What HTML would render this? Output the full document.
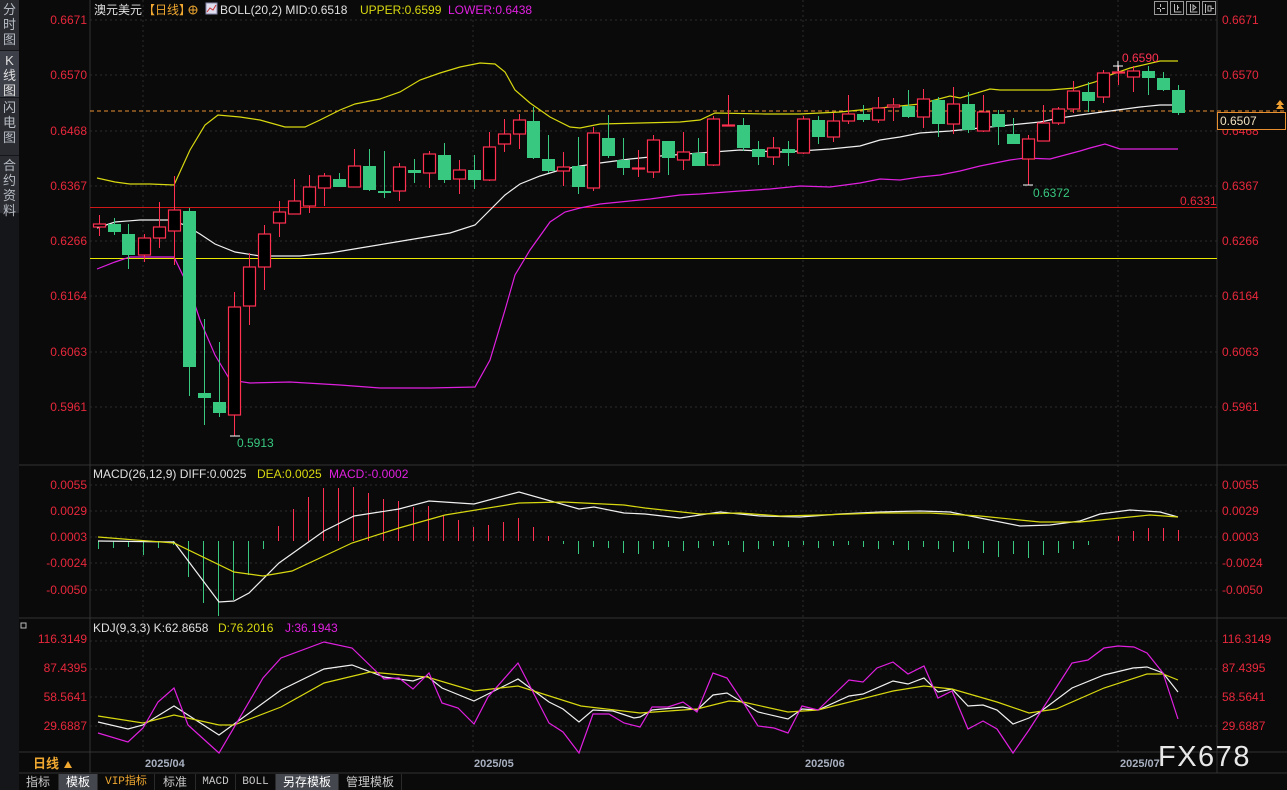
<!DOCTYPE html>
<html><head><meta charset="utf-8">
<style>
html,body{margin:0;background:#0a0a0a;width:1287px;height:790px;overflow:hidden;font-family:"Liberation Sans","Noto Sans CJK SC",sans-serif}
#side{position:absolute;left:0;top:0;width:19px;height:790px;background:#15161a}
.sb{position:absolute;left:0;width:19px;background:#2a2c31;color:#b8bcc4;font-size:13px;line-height:15px;text-align:center;padding-top:2px;box-sizing:border-box}
svg{position:absolute;left:0;top:0}
#tabs{position:absolute;left:18px;top:774px;height:16px;display:flex;font-size:12px;line-height:16px;color:#c8c8c8;white-space:nowrap;overflow:hidden}
#tabs div{padding:0 6px;border-right:1px solid #2a2a2a;white-space:nowrap;text-align:center}
</style></head><body>
<div id="side">
<div class="sb" style="top:0;height:50px">分<br>时<br>图</div>
<div class="sb" style="top:51px;height:46px;background:#3c3f47;color:#e0e0e0">K<br>线<br>图</div>
<div class="sb" style="top:98px;height:57px">闪<br>电<br>图</div>
<div class="sb" style="top:156px;height:57px">合<br>约<br>资<br>料</div>
</div>
<svg id="s" width="1287" height="790" xmlns="http://www.w3.org/2000/svg"></svg>
<div id="tabs">
<div style="width:28px">指标</div><div style="background:#45474f;color:#fff;width:26px">模板</div><div style="color:#f0a830;width:44px;font-family:'Liberation Mono','Noto Sans CJK SC',monospace;font-size:11px">VIP指标</div><div style="width:28px">标准</div><div style="width:27px;font-family:'Liberation Mono',monospace;font-size:11px">MACD</div><div style="width:27px;font-family:'Liberation Mono',monospace;font-size:11px">BOLL</div><div style="background:#45474f;color:#fff;width:50px">另存模板</div><div style="width:50px">管理模板</div>
</div>
<script>
var o='';
function L(x1,y1,x2,y2,c,w,d){o+='<line x1="'+x1+'" y1="'+y1+'" x2="'+x2+'" y2="'+y2+'" stroke="'+c+'" stroke-width="'+(w||1)+'"'+(d?' stroke-dasharray="'+d+'"':'')+'/>';}
function P(pts,c){o+='<polyline fill="none" stroke="'+c+'" stroke-width="1.2" points="'+pts+'"/>';}
function T(x,y,t,c,s,a,extra){o+='<text x="'+x+'" y="'+y+'" fill="'+c+'" font-size="'+(s||12)+'"'+(a?' text-anchor="'+a+'"':'')+(extra||'')+'>'+t+'</text>';}
L(90,0,90,773,'#333');L(1217,0,1217,773,'#333');
L(19,465,1287,465,'#333');L(19,618,1287,618,'#333');L(19,752,1287,752,'#333');L(19,773,1287,773,'#333');
[20,75,131,186,241,296,352,407].forEach(function(y){L(90,y,1217,y,'#2c2c2c',1,'2,3');});
[485,511,537,563,590,641,669,697,726].forEach(function(y){L(90,y,1217,y,'#2c2c2c',1,'2,3');});
[143,473,803,1118].forEach(function(x){L(x,0,x,752,'#2c2c2c',1,'2,3');});
var pl=[['0.6671',20],['0.6570',75],['0.6468',131],['0.6367',186],['0.6266',241],['0.6164',296],['0.6063',352],['0.5961',407]];
pl.forEach(function(p){T(87,p[1]+4,p[0],'#e8283c',12,'end');T(1222,p[1]+4,p[0],'#e8283c',12);});
[['0.0055',485],['0.0029',511],['0.0003',537],['-0.0024',563],['-0.0050',590]].forEach(function(p){T(87,p[1]+4,p[0],'#e8283c',12,'end');T(1222,p[1]+4,p[0],'#e8283c',12);});
[['116.3149',639],['87.4395',668],['58.5641',697],['29.6887',726]].forEach(function(p){T(87,p[1]+4,p[0],'#e8283c',12,'end');T(1222,p[1]+4,p[0],'#e8283c',12);});
L(90,207.5,1217,207.5,'#d01818');L(90,258.5,1217,258.5,'#e8e800');
L(90,111,1287,111,'#e89030',1,'4,3');
P('97,178 115,182 130,184 150,184 174,185 190,150 205,125 218,115 240,117 260,120 285,127 305,127 320,120 340,110 355,104 380,99 400,92 420,80 440,73 460,67 480,63 495,64 505,72 515,90 530,103 550,117 570,127 580,128 600,124 640,123 680,122 700,120 715,113 765,114 800,114 840,112 860,110 890,107 920,104 950,96 960,98 990,89 1000,90 1050,90 1075,88 1095,82 1110,75 1130,68 1160,61 1178,61','#d8d810');
P('97,228 115,222 140,220 170,220 185,225 200,234 215,244 235,252 260,256 300,256 330,253 360,248 390,243 420,238 450,233 475,225 490,210 505,195 520,184 540,176 560,170 580,166 600,163 630,159 660,156 700,153 740,150 780,152 800,151 830,149 860,146 880,140 900,137 920,133 950,131 980,128 1000,126 1020,124 1040,122 1060,118 1080,115 1110,111 1140,107 1160,105 1178,105','#f0f0f0');
P('97,269 115,262 130,257 174,257 190,290 200,320 215,355 230,380 250,383 290,382 340,385 380,388 430,388 475,387 490,360 505,310 515,275 530,250 550,222 565,212 580,208 600,204 650,199 680,195 700,194 740,191 770,189 800,186 830,187 860,183 880,179 900,180 920,177 940,175 960,171 980,166 1000,162 1010,160 1025,158 1050,159 1080,151 1090,148 1105,144 1120,149 1150,149 1178,149','#e020e0');
var C=[[98.7,224,227,215,236,'r'],[113.7,224,232,218,235,'g'],[128.3,234,255,224,269,'g'],[143.7,238,255,234,262,'r'],[158.7,227,238,202,248,'r'],[173.7,210,231,176,265,'r'],[188.7,211,367,208,396,'g'],[203.7,393,398,319,425,'g'],[218.7,402,413,342,417,'g'],[233.7,307,415,292,436,'r'],[248.7,267,306,253,325,'r'],[263.7,234,267,225,290,'r'],[278.7,212,223,201,237,'r'],[293.7,201,214,179,206,'r'],[308.7,187,206,175,213,'r'],[323.7,176,188,173,206,'r'],[338.7,179,187,173,184,'g'],[353.7,166,187,149,187,'r'],[368.7,166,190,149,191,'g'],[383.7,191,193,151,198,'g'],[398.7,167,191,163,201,'r'],[413.7,170,173,159,183,'g'],[428.7,154,173,151,188,'r'],[443.7,155,180,143,183,'g'],[458.7,170,179,160,194,'r'],[473.7,170,180,155,189,'g'],[488.7,147,180,132,181,'r'],[503.7,134,144,119,152,'r'],[518.5,120,134,114,149,'r'],[533.3,121,158,107,159,'g'],[548,159,171,135,173,'g'],[563,167,171,152,186,'r'],[578,166,187,137,194,'g'],[593.3,133,188,127,191,'r'],[608.3,138,156,115,158,'g'],[623,160,168,138,175,'g'],[638.3,168,169,150,177,'r'],[653.3,140,172,135,178,'r'],[668.3,141,158,141,175,'g'],[683.3,152,160,132,170,'r'],[698.3,153,166,138,166,'g'],[713.3,119,165,116,166,'r'],[728.3,125,126,95,126,'r'],[743,125,148,118,151,'g'],[758,149,157,141,165,'g'],[773,148,157,137,165,'r'],[788,149,153,141,166,'g'],[803.3,119,153,116,154,'r'],[818.3,120,137,116,144,'g'],[833.3,121,137,113,142,'r'],[848,114,121,95,124,'r'],[863,114,120,105,122,'g'],[878,108,120,97,123,'r'],[893,105,107,98,121,'r'],[908,106,117,90,118,'g'],[923,99,117,89,128,'r'],[938,100,124,97,137,'g'],[953,104,124,87,134,'r'],[968,104,130,92,133,'g'],[983,112,131,95,132,'r'],[998,114,127,110,145,'g'],[1013.3,134,144,118,144,'g'],[1028.3,139,159,135,185,'r'],[1043.3,123,141,105,141,'r'],[1058.3,109,123,107,125,'r'],[1073.3,91,109,81,113,'r'],[1088.3,92,101,82,112,'g'],[1103.3,73,97,70,103,'r'],[1118.3,72,73,66,85,'r'],[1133.3,71,77,66,92,'r'],[1148.3,71,78,66,95,'g'],[1163.3,78,90,72,91,'g'],[1178.3,90,113,85,115,'g']];
C.forEach(function(c){var x=Math.round(c[0])+0.5,col=c[5]=='r'?'#ff3050':'#38c880';
L(x,c[3],x,c[4],col);var t=Math.min(c[1],c[2]),b=Math.max(c[1],c[2]);if(b-t<1)b=t+1;
if(c[5]=='r')o+='<rect x="'+(x-6)+'" y="'+t+'" width="12" height="'+(b-t)+'" fill="#000" stroke="'+col+'" stroke-width="1.2"/>';
else o+='<rect x="'+(x-6.5)+'" y="'+t+'" width="13" height="'+(b-t)+'" fill="'+col+'"/>';});
L(230,436,240,436,'#fff');L(1113,66,1123,66,'#fff');L(1118,61,1118,71,'#fff');L(1023,185,1033,185,'#fff');
T(237,447,'0.5913','#38c880',12);T(1122,62,'0.6590','#ff3050',12);T(1033,197,'0.6372','#38c880',12);T(1180,205,'0.6331','#e8283c',12);
o+='<rect x="1217.5" y="112.5" width="68" height="17" fill="#0a0a0a" stroke="#e89030"/>';T(1220,125,'0.6507','#f0e0c0',12);
o+='<path d="M1276,105 L1280,100 L1284,105 Z M1276,109 L1280,104 L1284,109 Z" fill="#f0a030"/>';
[1154,1170,1186,1202].forEach(function(x,i){o+='<rect x="'+(x+0.5)+'" y="1.5" width="13" height="13" fill="none" stroke="#999"/>';});
o+='<path d="M1160.5,4v3M1160.5,9v3M1157,8.5h3M1162,8.5h3" stroke="#bbb"/><path d="M1174.5,4v8h7M1177.5,5v5M1179,7l-1.5,1.5" stroke="#bbb" fill="none"/><path d="M1190.5,4v8h7M1193,5v5l3,-2.5z" stroke="#bbb" fill="none"/><path d="M1205.5,4v9M1208,6h3v5h-3z M1211,8.5h3" stroke="#bbb" fill="none"/>';
T(94,14,'澳元美元','#e0e0e0',12);T(143,14,'【日线】','#f0a830',12);
o+='<circle cx="193" cy="10" r="4" fill="none" stroke="#f0a830"/><path d="M189,10h8M193,6v8" stroke="#f0a830"/>';
o+='<rect x="206" y="3" width="11" height="11" fill="#dde" stroke="#88a"/><path d="M207,12l3,-4l3,2l3,-5" stroke="#c33" fill="none"/>';
T(220,14,'BOLL(20,2) MID:0.6518','#e0e0e0',12);T(360,14,'UPPER:0.6599','#d8d810',12);T(448,14,'LOWER:0.6438','#e020e0',12);
T(93,478,'MACD(26,12,9) DIFF:0.0025','#e0e0e0',12);T(257,478,'DEA:0.0025','#d8d810',12);T(329,478,'MACD:-0.0002','#e020e0',12);
var M=[549,548,547,555,548,545,577,603,616,600,575,549,526,509,497,488,488,487,493,499,501,507,506,515,520,527,525,522,518,527,536,544,554,547,548,553,554,549,547,551,548,546,545,552,549,546,547,545,548,546,545,547,549,545,550,547,549,552,549,553,557,554,558,555,553,549,545,541,536,531,528,528,530,533,543];
for(var i=0;i<73;i++){var x=98.5+15*i,v=M[i];if(v==undefined)continue;var col=v<541?'#ff3050':'#38c880';L(x,541,x,v,col);}
P('98,541 174,542 219,602 234,601 249,593 279,563 324,531 354,516 399,509 429,501 474,504 519,492 579,509 594,507 624,513 645,514 680,518 720,512 760,516 800,517 840,514 880,512 920,511 950,512 980,518 1020,526 1050,525 1080,521 1100,514 1130,510 1160,512 1178,517','#f0f0f0');
P('98,537 174,543 234,572 263,576 292,571 352,543 399,528 445,515 519,503 563,502 624,505 645,508 700,514 740,513 780,516 820,515 880,513 930,513 980,516 1040,522 1080,522 1120,518 1150,515 1178,517','#d8d810');
o+='<rect x="21" y="623" width="5" height="5" fill="none" stroke="#bbb"/>';
T(93,632,'KDJ(9,3,3) K:62.8658','#e0e0e0',12);T(218,632,'D:76.2016','#d8d810',12);T(285,632,'J:36.1943','#e020e0',12);
P('98,722 128,729 143,725 174,706 219,735 281,690 324,669 352,665 384,677 413,681 427,676 442,688 474,701 518,679 549,702 563,709 579,722 593,710 613,711 634,718 640,717 652,710 683,707 697,710 713,695 727,693 758,712 788,719 802,709 818,710 849,696 863,694 893,681 908,684 924,678 938,692 952,689 968,706 983,705 997,710 1013,724 1029,718 1040,712 1072,688 1104,675 1133,668 1147,667 1163,673 1178,692','#f0f0f0');
P('98,716 143,723 174,715 219,725 234,725 281,707 324,683 370,672 413,676 427,677 474,691 518,686 581,706 640,713 697,709 729,701 743,702 788,712 818,710 893,691 924,686 952,689 997,702 1029,713 1056,709 1104,688 1147,674 1163,674 1178,680','#d8d810');
P('98,733 128,742 143,728 158,702 174,688 188,725 219,753 263,678 281,658 324,642 352,648 384,679 399,678 413,689 429,673 442,703 458,708 474,724 488,697 518,663 549,723 563,732 579,753 593,714 609,714 624,723 640,727 652,707 668,707 683,702 697,712 713,673 727,678 743,702 758,726 774,728 788,733 802,706 818,710 849,680 863,682 877,668 893,662 908,674 924,666 938,698 952,691 968,729 983,721 997,729 1013,753 1029,730 1072,663 1088,660 1104,648 1118,646 1134,647 1147,653 1163,673 1178,719','#e020e0');
T(33,768,'日线','#f0a830',13,'',' font-weight="bold"');o+='<path d="M64,768l4,-7l4,7z" fill="#f0a830"/>';
[[145,'2025/04'],[474,'2025/05'],[805,'2025/06'],[1120,'2025/07']].forEach(function(d){T(d[0],767,d[1],'#a8b0c0',11,'',' font-weight="bold"');});
T(1158,766,'FX678','#e8e8e8',29,'',' letter-spacing="1.5"');
document.getElementById('s').innerHTML=o;
</script>
</body></html>
